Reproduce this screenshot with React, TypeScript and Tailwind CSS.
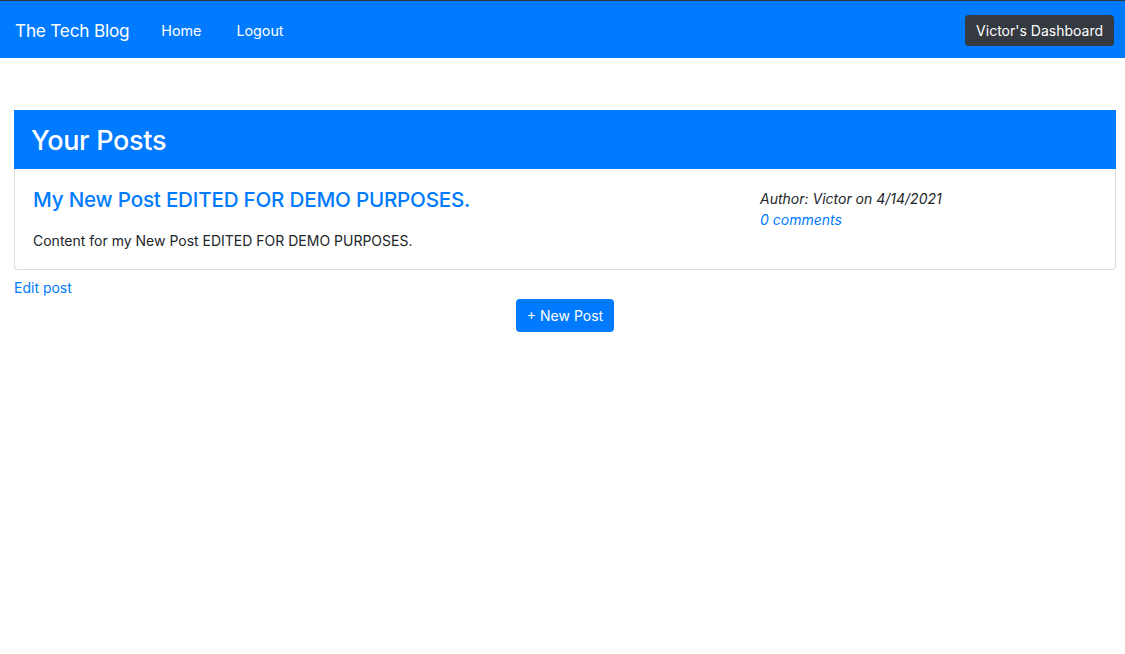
const font = { fontFamily: 'Inter, "Liberation Sans", sans-serif' }

const Navbar = () => {
  return (
    <header className="h-[58px] bg-[#007bff] border-t border-[#2f3640] flex items-center justify-between pl-[15px] pr-[11px] pt-[2px]">
      <div className="flex items-center">
        <a className="text-[17.2px] text-white tracking-[-0.2px]">The Tech Blog</a>
        <nav className="flex items-center ml-[32px] gap-[35px] text-[14.3px] text-white">
          <a>Home</a>
          <a>Logout</a>
        </nav>
      </div>
      <button className="h-[31px] px-[11px] rounded-[4px] bg-[#343a40] text-white text-[14px]">
        Victor's Dashboard
      </button>
    </header>
  )
}

const PostCard = () => {
  return (
    <div>
      <div className="h-[59px] bg-[#007bff] flex items-center px-[17px] pt-[3px]">
        <h2 className="text-[27px] font-medium text-white tracking-[-0.3px]">Your Posts</h2>
      </div>
      <div className="border border-t-0 border-[#dcdcdc] rounded-b-[4px] h-[101px] flex pl-[18px] pt-[16px]">
        <div className="w-[727px]">
          <h3 className="text-[20.6px] font-medium text-[#007bff] leading-[30px] tracking-[-0.2px]">
            My New Post EDITED FOR DEMO PURPOSES.
          </h3>
          <p className="mt-[15px] text-[14px] text-[#212529]">Content for my New Post EDITED FOR DEMO PURPOSES.</p>
        </div>
        <div className="pt-[3px] text-[14px] italic leading-[21px]">
          <p className="text-[#212529]">Author: Victor on 4/14/2021</p>
          <a className="text-[#007bff]">0 comments</a>
        </div>
      </div>
    </div>
  )
}

export default function App() {
  return (
    <div style={font} className="min-h-[654px] bg-white">
      <Navbar />
      <main className="pl-[14px] pr-[9px] pt-[52px]">
        <PostCard />
        <a className="block mt-[7px] text-[14px] text-[#007bff]">Edit post</a>
        <div className="flex justify-center mt-[1px]">
          <button className="h-[33px] px-[11px] rounded-[4px] bg-[#007bff] text-white text-[14px]">+ New Post</button>
        </div>
      </main>
    </div>
  )
}
